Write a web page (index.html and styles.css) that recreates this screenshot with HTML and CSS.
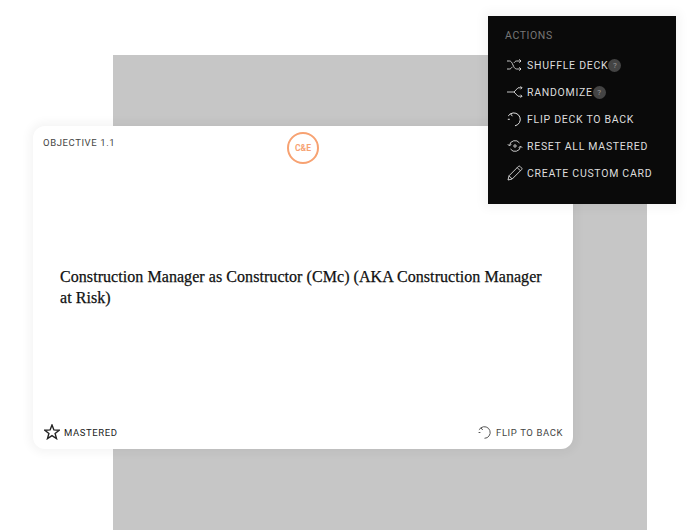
FILE: index.html
```html
<!DOCTYPE html>
<html lang="en">
<head>
<meta charset="utf-8">
<title>Flashcards</title>
<link rel="stylesheet" href="styles.css">
</head>
<body>
<div class="scene">
  <div class="backdrop"></div>
  <section class="card">
    <header class="card-head">
      <span class="objective">OBJECTIVE 1.1</span>
      <span class="badge">C&amp;E</span>
    </header>
    <p class="term">Construction Manager as Constructor (CMc) (AKA Construction Manager at Risk)</p>
    <footer class="card-foot">
      <span class="foot-action">
        <svg class="star" viewBox="0 0 16 16" width="16" height="16"><path d="M8 1l1.900 4.900 5.300.3-4.100 3.300 1.400 5.100L8 11.700l-4.500 2.900 1.400-5.100L.8 6.200l5.300-.3z" fill="none" stroke="#222" stroke-width="1.400"/></svg>
        <span>MASTERED</span>
      </span>
      <span class="foot-action flip">
        <svg viewBox="0 0 14 14" width="14" height="14"><path d="M3 2.800A5.800 5.800 0 1 1 6.500 13.300M.9 4.800L3 2.800l1.700 2.200M.6 7.500h1.800" fill="none" stroke="#555" stroke-width="1"/></svg>
        <span>FLIP TO BACK</span>
      </span>
    </footer>
  </section>
  <nav class="menu">
    <h2 class="menu-title">ACTIONS</h2>
    <ul class="menu-list">
      <li class="menu-item">
        <svg viewBox="0 0 16 14" width="16" height="14"><path d="M0 3h2.500C6 3 6 11 9.500 11H14M0 11h2.500c1.200 0 2-1 2.700-2.200M7 5c.6-1.100 1.400-2 2.500-2H14M12.300 1.300L14 3l-1.700 1.700M12.300 9.300L14 11l-1.700 1.700" fill="none" stroke="#ddd" stroke-width=".9"/></svg>
        <span>SHUFFLE DECK</span><i class="help">?</i>
      </li>
      <li class="menu-item">
        <svg viewBox="0 0 16 14" width="16" height="14"><path d="M0 7h7L11 2.800H15M7 7l4 4.200H15M13.500 1.300L15 2.800l-1.500 1.500M13.500 9.700L15 11.200l-1.500 1.500" fill="none" stroke="#ddd" stroke-width=".9"/></svg>
        <span>RANDOMIZE</span><i class="help">?</i>
      </li>
      <li class="menu-item">
        <svg viewBox="0 0 16 16" width="16" height="16"><path d="M3.500 2.800A6.500 6.500 0 1 1 8 14.800M1.200 4.900L3.500 2.800l1.900 2.400M.8 8.300h2" fill="none" stroke="#e2e2e2" stroke-width="1"/></svg>
        <span>FLIP DECK TO BACK</span>
      </li>
      <li class="menu-item">
        <svg viewBox="0 0 16 14" width="16" height="14"><path d="M2.500 6.500A5.500 5.500 0 0 1 12.500 4M13.500 7.500A5.500 5.500 0 0 1 3.500 10M.8 5.200L2.500 7l1.700-1.800M11.800 8.800l1.700-1.800 1.700 1.800" fill="none" stroke="#ddd" stroke-width=".9"/><circle cx="8" cy="7" r="1.200" fill="none" stroke="#ddd" stroke-width=".9"/></svg>
        <span>RESET ALL MASTERED</span>
      </li>
      <li class="menu-item">
        <svg viewBox="0 0 16 16" width="16" height="16"><path d="M1 15l1-4.200L11.500 1.300a1 1 0 0 1 1.400 0l1.800 1.800a1 1 0 0 1 0 1.400L5.200 14zM2 10.800L5.200 14M10.200 2.600l3.200 3.200" fill="none" stroke="#ddd" stroke-width=".9"/></svg>
        <span>CREATE CUSTOM CARD</span>
      </li>
    </ul>
  </nav>
</div>
</body>
</html>
```

FILE: styles.css
```css
* { box-sizing: border-box; }
html, body { margin: 0; padding: 0; background: #fff; }
.scene { position: relative; width: 700px; height: 530px; overflow: hidden; font-family: "Roboto", "Liberation Sans", sans-serif; }
.backdrop { position: absolute; left: 113px; top: 55px; width: 534px; height: 475px; background: #c6c6c6; }
.card { position: absolute; left: 33px; top: 126px; width: 540px; height: 323px; background: #fff; border-radius: 12px; box-shadow: 0 0 10px 4px rgba(0,0,0,.045); display: flex; flex-direction: column; padding: 10px; }
.card-head { position: relative; height: 54px; }
.objective { display: block; font-size: 9.500px; line-height: 13px; letter-spacing: .6px; color: #444; }
.badge { position: absolute; left: 244px; top: -4px; width: 32px; height: 32px; border: 2px solid #f7a272; border-radius: 50%; display: flex; align-items: center; justify-content: center; font-size: 8.500px; font-weight: 700; color: #f7a272; }
.term { margin: 76px 0 0; padding: 0 17px; font-family: "Liberation Serif", serif; font-size: 16px; line-height: 21px; letter-spacing: .06px; -webkit-text-stroke: .25px #111; color: #111; flex: 1; }
.card-foot { display: flex; justify-content: space-between; align-items: center; height: 20px; margin-top: 3px; margin-bottom: -3px; font-size: 9.500px; letter-spacing: .6px; }
.foot-action { display: flex; align-items: center; gap: 4px; color: #222; margin-left: 1px; }
.flip { color: #444; gap: 4px; margin-left: 0; }
.menu { position: absolute; left: 488px; top: 16px; width: 188px; height: 188px; background: #0a0a0a; box-shadow: 0 0 10px 4px rgba(0,0,0,.045); padding: 13px 17px; }
.menu-title { margin: 0 0 12px; font-size: 10.500px; font-weight: 400; line-height: 14px; letter-spacing: .6px; color: #777; }
.menu-list { list-style: none; margin: 0; padding: 0; display: flex; flex-direction: column; gap: 7px; }
.menu-item { display: flex; align-items: center; height: 20px; margin-left: 2px; gap: 4px; font-size: 10.500px; letter-spacing: .72px; color: #ddd; white-space: nowrap; }
.menu-item svg { flex: none; }
.help { width: 13px; height: 13px; margin-left: -4px; border-radius: 50%; background: #444; color: #999; font-size: 8px; font-style: normal; letter-spacing: 0; display: flex; align-items: center; justify-content: center; }
```
